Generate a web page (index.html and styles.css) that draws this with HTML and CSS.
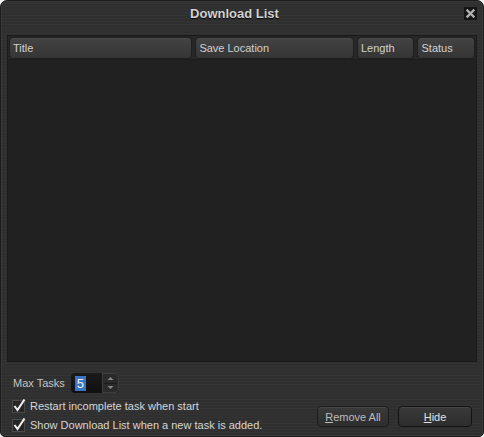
FILE: index.html
```html
<!DOCTYPE html>
<html>
<head>
<meta charset="utf-8">
<link rel="stylesheet" href="styles.css">
</head>
<body>
<div class="window">
  <div class="titlebar">
    <span class="title">Download List</span>
    <span class="close"><svg width="13" height="13" viewBox="0 0 13 13"><path d="M3.5 3.5 L9.5 9.5 M9.5 3.5 L3.5 9.5" stroke="#b0b0b0" stroke-width="2.4" stroke-linecap="square"/></svg></span>
  </div>
  <div class="list">
    <div class="header">
      <div class="col c-title">Title</div>
      <div class="col c-save">Save Location</div>
      <div class="col c-len">Length</div>
      <div class="col c-status">Status</div>
    </div>
    <div class="rows"></div>
  </div>
  <div class="footer">
    <div class="options">
      <div class="maxrow">
        <span class="label">Max Tasks</span>
        <div class="spin">
          <div class="spin-field"><span class="sel">5</span></div>
          <div class="spin-btns">
            <svg width="17" height="20" viewBox="0 0 17 20"><path d="M5.5 7 L8.5 4 L11.5 7 Z" fill="#8a8a8a"/><path d="M2 10.5 H15" stroke="#1c1c1c" stroke-width="1"/><path d="M5.5 13 L8.5 16 L11.5 13 Z" fill="#8a8a8a"/></svg>
          </div>
        </div>
      </div>
      <label class="check"><svg width="14" height="14" viewBox="0 0 14 14"><rect x="0.5" y="1.5" width="12" height="12" fill="#262626" stroke="#4a4a4a"/><path d="M2.5 7 L5.5 11 L12.5 0.5" fill="none" stroke="#f2f2f2" stroke-width="2"/></svg><span>Restart incomplete task when start</span></label>
      <label class="check"><svg width="14" height="14" viewBox="0 0 14 14"><rect x="0.5" y="1.5" width="12" height="12" fill="#262626" stroke="#4a4a4a"/><path d="M2.5 7 L5.5 11 L12.5 0.5" fill="none" stroke="#f2f2f2" stroke-width="2"/></svg><span>Show Download List when a new task is added.</span></label>
    </div>
    <div class="buttons">
      <button class="btn remove"><u>R</u>emove All</button>
      <button class="btn hide"><u>H</u>ide</button>
    </div>
  </div>
</div>
</body>
</html>
```
FILE: styles.css
```css
html, body {
  margin: 0;
  padding: 0;
  background: #f0f0f0;
}
body {
  width: 484px;
  height: 437px;
  font-family: "Liberation Sans", Arial, sans-serif;
  font-size: 11px;
}
.window {
  box-sizing: border-box;
  width: 484px;
  height: 437px;
  display: flex;
  flex-direction: column;
  border: 1px solid #1c1c1c;
  border-radius: 7px 7px 5px 5px;
  background-color: #303030;
  background-image: repeating-linear-gradient(180deg, #2f2f2f 0px, #2f2f2f 2px, #343434 2px, #343434 3px);
  box-shadow: inset 0 0 0 1px #3a3a3a;
  overflow: hidden;
}
.titlebar {
  height: 34px;
  display: grid;
  grid-template-columns: 1fr auto 1fr;
  align-items: start;
}
.title {
  grid-column: 2;
  margin-top: 5px;
  margin-right: 15px;
  font-size: 13px;
  font-weight: bold;
  color: #d2d2d2;
  text-shadow: 0 1px 1px #000;
}
.close {
  grid-column: 3;
  justify-self: end;
  margin: 6px 6px 0 0;
  width: 13px;
  height: 13px;
  background: #141414;
  border-radius: 1px;
  display: flex;
}
.list {
  margin: 0 6px;
  height: 327px;
  box-sizing: border-box;
  border: 1px solid #1a1a1a;
  background: #222222;
  display: flex;
  flex-direction: column;
}
.header {
  display: flex;
  gap: 3px;
  padding: 1px 1px 0 1px;
  height: 24px;
  box-sizing: border-box;
  background: #272727;
  border-bottom: 1px solid #1c1c1c;
}
.col {
  box-sizing: border-box;
  height: 22px;
  border: 1px solid #1e1e1e;
  border-radius: 4px;
  background: linear-gradient(180deg, #434343 0%, #3b3b3b 55%, #353535 100%);
  box-shadow: inset 0 1px 0 #4c4c4c;
  color: #d2d2d2;
  line-height: 20px;
  padding-left: 3px;
  white-space: nowrap;
}
.c-title { width: 185px; }
.c-save { width: 160px; }
.c-len { width: 58px; }
.c-status { width: 58px; }
.rows {
  flex: 1;
  background: #212121;
}
.footer {
  flex: 1;
  display: flex;
  justify-content: space-between;
  align-items: flex-end;
  padding: 0 11px 2px 11px;
}
.options {
  display: flex;
  flex-direction: column;
}
.maxrow {
  display: flex;
  align-items: center;
  gap: 6px;
  margin-bottom: 3px;
  padding-left: 1px;
}
.label {
  color: #c4c4c4;
}
.spin {
  display: flex;
  width: 48px;
  height: 20px;
  border-radius: 4px;
  overflow: hidden;
  background: linear-gradient(180deg, #1a1a1a, #101010);
}
.spin-field {
  width: 31px;
  display: flex;
  align-items: center;
  padding-left: 4px;
}
.sel {
  background: #3a74c4;
  color: #f4f4f4;
  font-size: 13px;
  line-height: 15px;
  padding: 0 2px;
}
.spin-btns {
  width: 17px;
  background: #2a2a2a;
  box-sizing: border-box;
  border-radius: 0 4px 4px 0;
  box-shadow: inset 0 0 0 1px #3e3e3e;
}
.check {
  display: flex;
  align-items: center;
  gap: 4px;
  height: 19px;
  color: #d6d6d6;
}
.buttons {
  display: flex;
  gap: 9px;
  margin-bottom: 7px;
}
.btn {
  box-sizing: border-box;
  height: 21px;
  border: 1px solid #1c1c1c;
  border-radius: 4px;
  background: linear-gradient(180deg, #3a3a3a 0%, #333333 50%, #2e2e2e 100%);
  box-shadow: inset 0 1px 0 #474747;
  font-family: "Liberation Sans", Arial, sans-serif;
  font-size: 11px;
  padding: 0;
}
.remove {
  width: 72px;
  color: #bdbdbd;
}
.hide {
  width: 74px;
  color: #e2e2e2;
  border-color: #121212;
}
```
